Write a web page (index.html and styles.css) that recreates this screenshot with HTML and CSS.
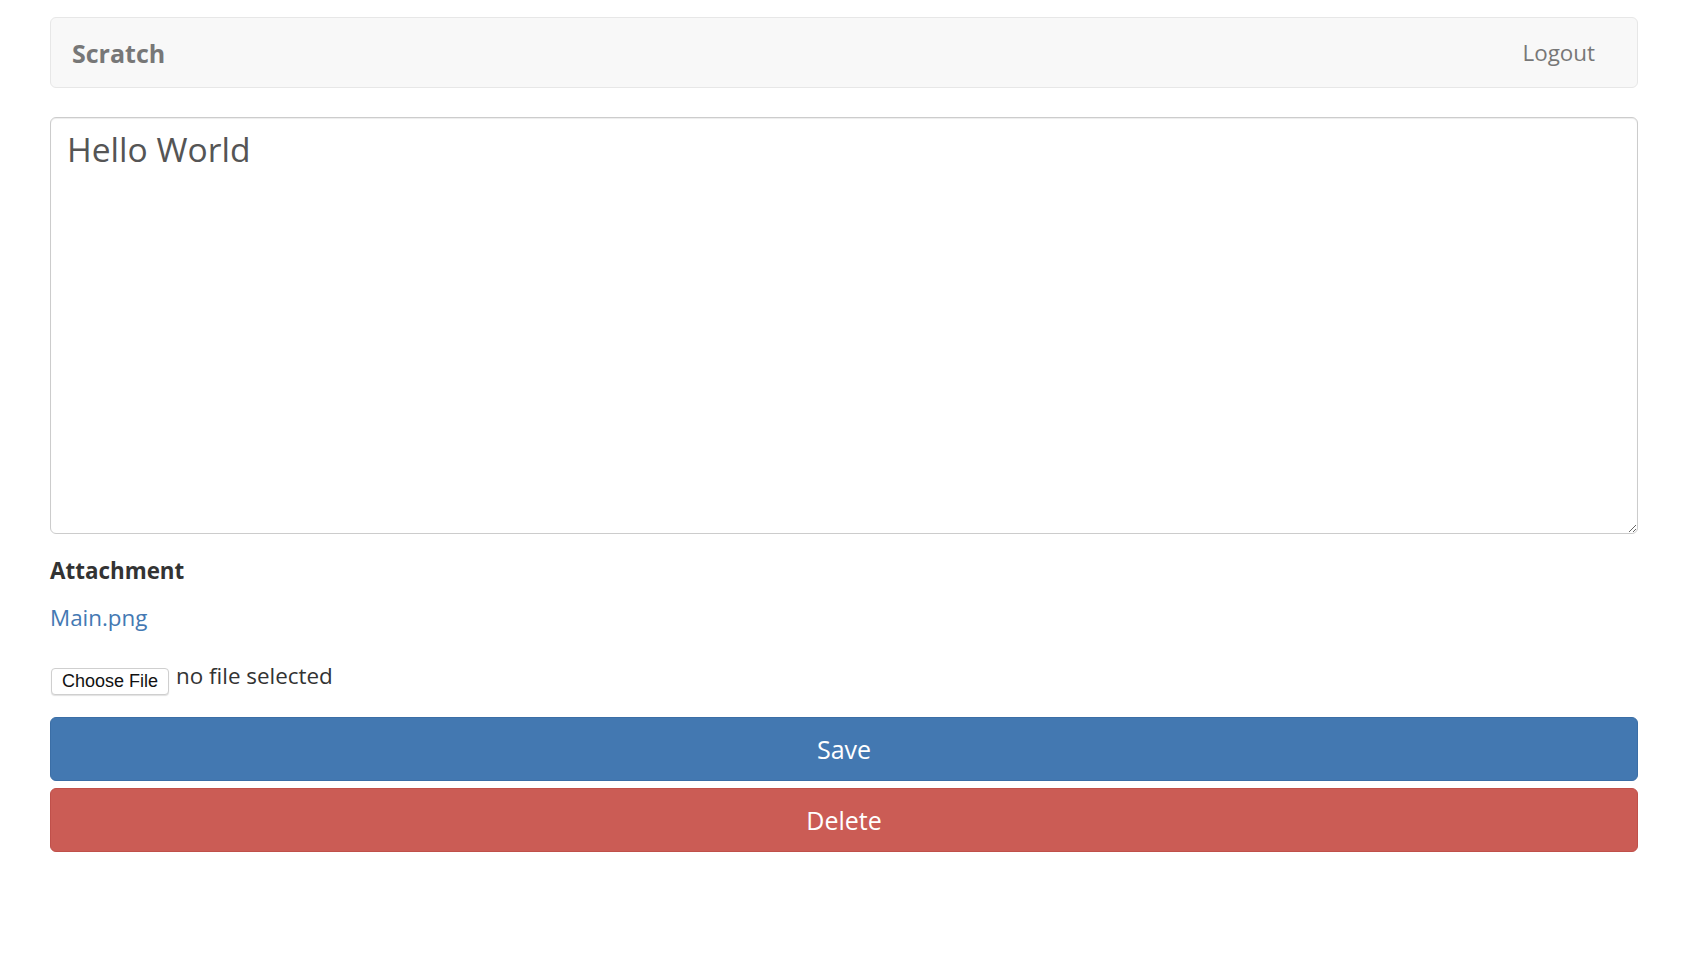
FILE: index.html
```html
<!DOCTYPE html>
<html lang="en">
<head>
<meta charset="utf-8">
<title>Scratch</title>
<link rel="stylesheet" href="styles.css">
</head>
<body>
<div class="app">
  <nav class="navbar">
    <a class="brand" href="#">Scratch</a>
    <a class="nav-link" href="#">Logout</a>
  </nav>
  <form class="note-form">
    <textarea class="note-body">Hello World</textarea>
    <div class="form-group">
      <label class="label">Attachment</label>
      <a class="attachment-link" href="#">Main.png</a>
    </div>
    <div class="file-row">
      <span class="file-button">Choose File</span>
      <span class="file-text">no file selected</span>
    </div>
    <button type="button" class="btn btn-save">Save</button>
    <button type="button" class="btn btn-delete">Delete</button>
  </form>
</div>
</body>
</html>
```
FILE: styles.css
```css
html, body {
  margin: 0;
  padding: 0;
  background: #fff;
}
body {
  font-family: "Open Sans", "Liberation Sans", sans-serif;
  font-size: 22.4px;
  line-height: 1.42857;
  color: #333;
}
.app {
  padding: 17px 46px 0 50px;
}
.navbar {
  box-sizing: border-box;
  height: 71px;
  display: flex;
  align-items: center;
  justify-content: space-between;
  padding: 0 42px 0 21px;
  background: #f8f8f8;
  border: 1px solid #e7e7e7;
  border-radius: 6px;
}
.brand {
  font-size: 25px;
  font-weight: 700;
  color: #777;
  text-decoration: none;
  line-height: 34px;
}
.nav-link {
  font-size: 22.4px;
  color: #777;
  text-decoration: none;
  line-height: 32px;
}
.note-form {
  display: flex;
  flex-direction: column;
  margin-top: 29px;
}
.note-body {
  box-sizing: border-box;
  display: block;
  width: 100%;
  height: 417px;
  margin: 0;
  padding: 8px 16px;
  font-family: "Open Sans", "Liberation Sans", sans-serif;
  font-size: 33.6px;
  line-height: 1.42857;
  color: #555;
  background: #fff;
  border: 1px solid #ccc;
  border-radius: 6px;
  box-shadow: inset 0 1px 1px rgba(0, 0, 0, .075);
  resize: vertical;
  outline: none;
}
.form-group {
  display: flex;
  flex-direction: column;
  align-items: flex-start;
  margin-top: 21px;
}
.label {
  font-weight: 700;
  color: #333;
  line-height: 32px;
}
.attachment-link {
  margin-top: 15px;
  color: #4479b3;
  text-decoration: none;
  line-height: 32px;
}
.file-row {
  display: flex;
  align-items: flex-start;
  margin-top: 26px;
  height: 35px;
}
.file-button {
  box-sizing: border-box;
  margin-top: 8px;
  margin-left: 1px;
  height: 27px;
  padding: 0 10px;
  display: flex;
  align-items: center;
  font-family: "Liberation Sans", Arial, sans-serif;
  font-size: 18px;
  color: #111;
  background: #fff;
  border: 1px solid #cfcfcf;
  border-radius: 4px;
  box-shadow: 0 1px 1px rgba(0, 0, 0, .12);
}
.file-text {
  margin-left: 7px;
  color: #333;
  line-height: 32px;
}
.btn {
  box-sizing: border-box;
  display: block;
  width: 100%;
  height: 64px;
  margin: 0;
  padding: 0;
  font-family: "Open Sans", "Liberation Sans", sans-serif;
  font-size: 25px;
  color: #fff;
  border-radius: 6px;
  cursor: pointer;
}
.btn-save {
  margin-top: 22px;
  background: #4378b1;
  border: 1px solid #3b6ea6;
}
.btn-delete {
  margin-top: 7px;
  background: #cb5c55;
  border: 1px solid #c0504a;
}
```
